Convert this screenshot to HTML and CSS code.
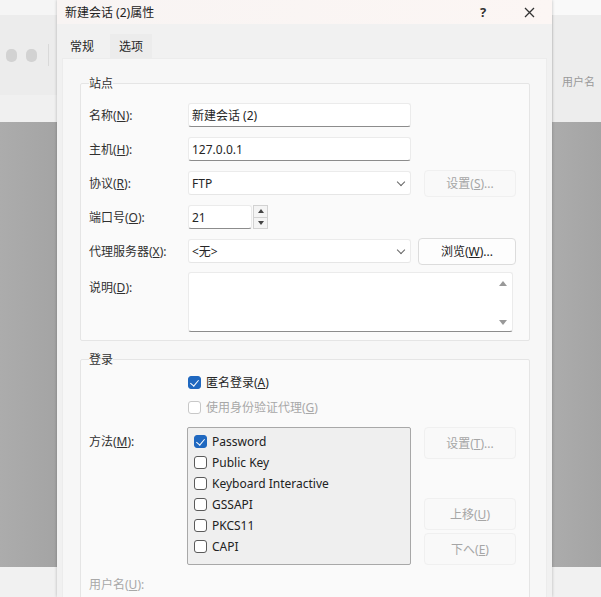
FILE: index.html
```html
<!DOCTYPE html>
<html lang="zh-CN">
<head>
  <meta charset="UTF-8">
  <title>新建会话 (2)属性</title>
  <link rel="stylesheet" href="styles.css">
</head>
<body>
  <div class="screen">
    <div class="side side-left">
      <div class="strip-top"></div>
      <div class="toolbar">
        <span class="tool-icon"></span>
        <span class="tool-icon"></span>
        <span class="tool-sep"></span>
      </div>
      <div class="strip-mid"></div>
      <div class="gray"></div>
      <div class="strip-bottom"></div>
    </div>

    <div class="dialog">
      <div class="titlebar">
        <span class="title">新建会话 (2)属性</span>
        <span class="help">?</span>
        <span class="close">
          <svg width="11" height="11" viewBox="0 0 11 11"><path d="M1 1L10 10M10 1L1 10" stroke="#333" stroke-width="1.3" fill="none"/></svg>
        </span>
      </div>

      <div class="tabs">
        <span class="tab active">常规</span>
        <span class="tab">选项</span>
      </div>

      <div class="panel">
        <fieldset class="group site">
          <legend>站点</legend>
          <div class="row">
            <label>名称(<u>N</u>):</label>
            <div class="field wide">新建会话 (2)</div>
          </div>
          <div class="row">
            <label>主机(<u>H</u>):</label>
            <div class="field wide">127.0.0.1</div>
          </div>
          <div class="row">
            <label>协议(<u>R</u>):</label>
            <div class="field wide select">FTP<span class="chevron"></span></div>
            <span class="btn disabled">设置(<u>S</u>)...</span>
          </div>
          <div class="row">
            <label>端口号(<u>O</u>):</label>
            <div class="field port">21</div>
            <div class="spinner"><span class="spin up"></span><span class="spin down"></span></div>
          </div>
          <div class="row">
            <label>代理服务器(<u>X</u>):</label>
            <div class="field wide select">&lt;无&gt;<span class="chevron"></span></div>
            <span class="btn">浏览(<u>W</u>)...</span>
          </div>
          <div class="row tall">
            <label>说明(<u>D</u>):</label>
            <div class="field memo">
              <span class="arrow arrow-up"></span>
              <span class="arrow arrow-down"></span>
            </div>
          </div>
        </fieldset>

        <fieldset class="group login">
          <legend>登录</legend>
          <div class="check-row">
            <span class="box checked"></span>
            <span>匿名登录(<u>A</u>)</span>
          </div>
          <div class="check-row faded">
            <span class="box"></span>
            <span>使用身份验证代理(<u>G</u>)</span>
          </div>
          <div class="method-row">
            <label>方法(<u>M</u>):</label>
            <ul class="method-list">
              <li><span class="box checked"></span>Password</li>
              <li><span class="box"></span>Public Key</li>
              <li><span class="box"></span>Keyboard Interactive</li>
              <li><span class="box"></span>GSSAPI</li>
              <li><span class="box"></span>PKCS11</li>
              <li><span class="box"></span>CAPI</li>
            </ul>
            <div class="method-buttons">
              <span class="btn disabled tallbtn">设置(<u>T</u>)...</span>
              <span class="spacer"></span>
              <span class="btn disabled tallbtn">上移(<u>U</u>)</span>
              <span class="btn disabled tallbtn">下へ(<u>E</u>)</span>
            </div>
          </div>
          <div class="row faded">
            <label>用户名(<u>U</u>):</label>
          </div>
        </fieldset>
      </div>
    </div>

    <div class="side side-right">
      <div class="strip-top"></div>
      <div class="header-cell">用户名</div>
      <div class="gray"></div>
      <div class="strip-bottom"></div>
    </div>
  </div>
</body>
</html>
```

FILE: styles.css
```css
html, body {
  margin: 0;
  padding: 0;
}
body {
  background: #a8a8a8;
  font-family: "Noto Sans", "Noto Sans CJK SC", sans-serif;
  font-size: 12px;
  color: #262626;
  width: 601px;
  height: 597px;
  overflow: hidden;
}
u { text-decoration: underline; }

.screen {
  display: flex;
  height: 597px;
}

/* background application */
.side {
  display: flex;
  flex-direction: column;
}
.side-left { width: 57px; }
.side-right { width: 49px; }
.strip-top { height: 15px; background: #f5f5f5; flex-shrink: 0; }
.toolbar {
  height: 80px;
  flex-shrink: 0;
  background: #ececec;
  display: flex;
  align-items: center;
  padding-left: 6px;
  gap: 9px;
}
.tool-icon {
  width: 11px;
  height: 13px;
  border-radius: 5px;
  background: #d2d2d2;
}
.tool-sep {
  width: 1px;
  height: 22px;
  background: #d9d9d9;
  margin-left: 2px;
}
.strip-mid { height: 27px; background: #f0f0f0; flex-shrink: 0; }
.gray {
  flex: 1;
  background: linear-gradient(to right, #acacac, #a4a4a4);
}
.strip-bottom { height: 30px; background: #f1f1f1; flex-shrink: 0; }
.side-right .strip-top { background: #f9f9f9; }
.header-cell {
  height: 107px;
  flex-shrink: 0;
  box-sizing: border-box;
  background: #ededed;
  color: #9a9a9a;
  font-size: 11px;
  display: flex;
  align-items: center;
  padding: 24px 0 0 9px;
  border-left: 1px solid #e2e2e2;
}

/* dialog */
.dialog {
  width: 495px;
  background: #f1f1f1;
  box-shadow: 0 0 3px rgba(0, 0, 0, 0.25);
  display: flex;
  flex-direction: column;
  position: relative;
  z-index: 1;
}
.titlebar {
  height: 24px;
  flex-shrink: 0;
  background: linear-gradient(to right, #f8f4f3, #fcf6f4);
  display: flex;
  align-items: center;
  padding-left: 8px;
}
.title { flex: 1; color: #222; }
.help {
  width: 46px;
  text-align: center;
  font-weight: bold;
  font-size: 13px;
  color: #333;
}
.close {
  width: 46px;
  display: flex;
  justify-content: center;
}

.tabs {
  display: flex;
  flex-shrink: 0;
  margin: 10px 0 0 5px;
  height: 24px;
}
.tab {
  display: flex;
  align-items: center;
  padding: 0 9px;
  margin-right: 2px;
  background: #ececec;
}
.tab.active {
  background: #f1f1f1;
  padding: 0 14px 0 8px;
}

.panel {
  flex: 1 0 auto;
  margin: 0 5px;
  background: #f7f7f7;
  border: 1px solid #ececec;
  padding: 16px 16px 0 17px;
}

.group {
  margin: 0;
  padding: 0 8px 8px;
  border: 1px solid #e5e5e5;
  border-radius: 2px;
  background: #fafafa;
}
.group legend {
  padding: 0;
  line-height: 17px;
  color: #333;
}
.site { padding-top: 10px; }
.login { margin-top: 10px; padding-top: 3px; }

.row {
  display: flex;
  align-items: center;
  height: 26px;
  margin-bottom: 8px;
}
.row label {
  width: 99px;
  flex-shrink: 0;
  color: #303030;
}
.row.tall {
  height: 60px;
  align-items: flex-start;
  margin-bottom: 0;
}
.row.tall label { padding-top: 6px; }

.field {
  height: 24px;
  box-sizing: border-box;
  background: #fff;
  border: 1px solid #ebebeb;
  border-bottom: 1px solid #8c8c8c;
  border-radius: 3px;
  display: flex;
  align-items: center;
  padding-left: 3px;
  position: relative;
}
.field.wide { width: 223px; }
.field.select {
  border-bottom-color: #e6e6e6;
}
.chevron {
  position: absolute;
  right: 6px;
  top: 7px;
  width: 5px;
  height: 5px;
  border-right: 1px solid #666;
  border-bottom: 1px solid #666;
  transform: rotate(45deg);
}
.field.port { width: 64px; }
.spinner {
  display: flex;
  flex-direction: column;
  width: 15px;
  height: 24px;
  margin-left: 1px;
  border: 1px solid #d2d2d2;
  box-sizing: border-box;
  background: #f4f4f4;
}
.spin {
  flex: 1;
  display: flex;
  align-items: center;
  justify-content: center;
}
.spin.up { border-bottom: 1px solid #d2d2d2; }
.spin::after {
  content: "";
  border-left: 3px solid transparent;
  border-right: 3px solid transparent;
}
.spin.up::after { border-bottom: 4px solid #444; }
.spin.down::after { border-top: 4px solid #444; }

.field.memo {
  width: 325px;
  height: 60px;
}
.arrow {
  position: absolute;
  right: 5px;
  border-left: 4px solid transparent;
  border-right: 4px solid transparent;
}
.arrow-up { top: 8px; border-bottom: 5px solid #999; }
.arrow-down { bottom: 6px; border-top: 5px solid #999; }

.btn {
  margin-left: 7px;
  width: 98px;
  height: 27px;
  box-sizing: border-box;
  background: #fdfdfd;
  border: 1px solid #dcdcdc;
  border-radius: 4px;
  display: flex;
  align-items: center;
  justify-content: center;
  color: #222;
}
.btn.disabled {
  background: #f9f9f9;
  border-color: #f0f0f0;
  color: #a6a6a6;
  margin-left: 13px;
  width: 92px;
}

.check-row {
  display: flex;
  align-items: center;
  height: 22px;
  margin: 0 0 3px 99px;
  gap: 5px;
}
.faded { color: #a8a8a8; }
.faded label { color: #a8a8a8; }

.box {
  width: 13px;
  height: 13px;
  box-sizing: border-box;
  border: 1px solid #5a5a5a;
  border-radius: 3px;
  background: #fff;
  flex-shrink: 0;
  position: relative;
}
.faded .box { border-color: #c8c8c8; }
.box.checked {
  background: #1f68c0;
  border-color: #1f68c0;
}
.box.checked::after {
  content: "";
  position: absolute;
  left: 3px;
  top: 1px;
  width: 4px;
  height: 7px;
  border-right: 1.5px solid #fff;
  border-bottom: 1.5px solid #fff;
  transform: rotate(40deg);
}

.method-row {
  display: flex;
  margin-top: 9px;
  height: 138px;
}
.method-row label {
  width: 98px;
  flex-shrink: 0;
  padding-top: 5px;
  color: #303030;
}
.method-list {
  list-style: none;
  margin: 0;
  padding: 3px 0 0 6px;
  width: 224px;
  box-sizing: border-box;
  background: #efefef;
  border: 1px solid #a8a8a8;
  border-radius: 2px;
}
.method-list li {
  display: flex;
  align-items: center;
  gap: 5px;
  height: 21px;
  color: #222;
}
.method-buttons {
  display: flex;
  flex-direction: column;
  gap: 3px;
}
.method-buttons .spacer { flex: 1; }
.btn.tallbtn { height: 32px; }
.login .row.faded {
  margin: 10px 0 0;
  height: 18px;
}
```
